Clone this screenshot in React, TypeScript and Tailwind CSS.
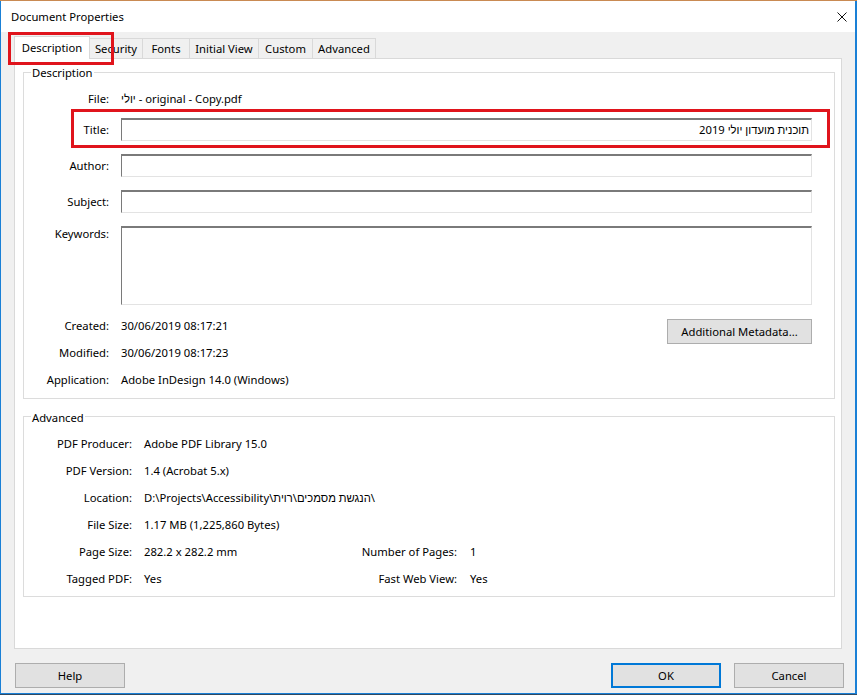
import React from "react";

function Input({ h = "h-[23px]", children }: { h?: string; children?: React.ReactNode }) {
  return (
    <div
      className={`${h} flex-1 bg-white border-t-2 border-l border-t-[#7a7a7a] border-l-[#7a7a7a] border-r border-b border-r-[#e3e3e3] border-b-[#e3e3e3] flex items-center`}
    >
      {children}
    </div>
  );
}

function Row({ label, children, top = "" }: { label: string; children: React.ReactNode; top?: string }) {
  return (
    <div className={`flex ${top} pr-[22px]`}>
      <div className="w-[85px] text-right shrink-0">{label}</div>
      <div className="ml-[12px] flex-1 flex">{children}</div>
    </div>
  );
}

function InfoRow({ label, value, mt = "" }: { label: string; value: string; mt?: string }) {
  return (
    <div className={`flex h-[16px] ${mt}`}>
      <div className="w-[85px] text-right shrink-0">{label}</div>
      <div className="ml-[12px]">{value}</div>
    </div>
  );
}

function AdvRow({
  label,
  value,
  label2,
  value2,
  mt = "",
}: {
  label: string;
  value: string;
  label2?: string;
  value2?: string;
  mt?: string;
}) {
  return (
    <div className={`flex h-[16px] ${mt}`}>
      <div className="w-[108px] text-right shrink-0">{label}</div>
      <div className="ml-[12px] w-[196px] shrink-0 whitespace-nowrap">{value}</div>
      {label2 && (
        <>
          <div className="w-[117px] text-right shrink-0">{label2}</div>
          <div className="ml-[13px]">{value2}</div>
        </>
      )}
    </div>
  );
}

export default function App() {
  return (
    <div className="relative w-[857px] h-[695px] bg-[#3d5366] flex flex-col font-['Noto_Sans','Liberation_Sans','DejaVu_Sans',sans-serif] text-[11.25px] leading-[16px] text-black">
      <div className="h-[1px] bg-[#c98a52]" />
      <div className="w-[857px] h-[693px] border-l border-r-2 border-b border-[#1a80d6] flex flex-col bg-[#f0f0f0]">
        {/* Title bar */}
        <div className="h-[31px] bg-white flex items-center justify-between pl-[10px] pr-[8px]">
          <span className="mt-[1px]">Document Properties</span>
          <svg width="10" height="10" viewBox="0 0 10 10" className="mt-[1px]">
            <path d="M0.5 0.5 L9.5 9.5 M9.5 0.5 L0.5 9.5" stroke="#111" strokeWidth="1" />
          </svg>
        </div>

        {/* Body */}
        <div className="flex-1 flex flex-col pl-[13px] pr-[11px]">
          {/* Tabs */}
          <div className="mt-[4px] h-[22px] flex items-end">
            <div className="relative z-10 w-[76px] h-[23px] -mb-[1px] bg-white border-t border-l border-r border-[#d9d9d9] flex items-center justify-center pb-[1px]">
              Description
            </div>
            <div className="w-[53px] h-[20px] border-t border-r border-[#d9d9d9] flex items-center justify-center">Security</div>
            <div className="w-[47px] h-[20px] border-t border-r border-[#d9d9d9] flex items-center justify-center">Fonts</div>
            <div className="w-[69px] h-[20px] border-t border-r border-[#d9d9d9] flex items-center justify-center">Initial View</div>
            <div className="w-[54px] h-[20px] border-t border-r border-[#d9d9d9] flex items-center justify-center">Custom</div>
            <div className="w-[63px] h-[20px] border-t border-r border-[#d9d9d9] flex items-center justify-center">Advanced</div>
          </div>

          {/* Panel */}
          <div className="w-[828px] h-[591px] bg-white border border-[#d9d9d9] pt-[5px] pl-[8px] pr-[6px]">
            <fieldset className="w-[812px] border border-[#dcdcdc] pb-[10px]">
              <legend className="relative top-[1px] ml-[7px] px-[1px]">Description</legend>
              <div className="flex flex-col">
                <div className="flex h-[16px] mt-[11px]">
                  <div className="w-[85px] text-right shrink-0">File:</div>
                  <div className="ml-[12px]">יולי - original - Copy.pdf</div>
                </div>
                <Row label="Title:" top="mt-[11px] items-center">
                  <Input>
                    <div dir="rtl" className="w-full text-right pr-[2px]">
                      תוכנית מועדון יולי 2019
                    </div>
                  </Input>
                </Row>
                <Row label="Author:" top="mt-[13px] items-center">
                  <Input />
                </Row>
                <Row label="Subject:" top="mt-[13px] items-center">
                  <Input />
                </Row>
                <Row label="Keywords:" top="mt-[13px] items-start">
                  <Input h="h-[79px]" />
                </Row>
                <div className="flex mt-[12px] pr-[22px]">
                  <div className="flex-1 flex flex-col pt-[1px]">
                    <InfoRow label="Created:" value="30/06/2019 08:17:21" />
                    <InfoRow label="Modified:" value="30/06/2019 08:17:23" mt="mt-[11px]" />
                    <InfoRow label="Application:" value="Adobe InDesign 14.0 (Windows)" mt="mt-[11px]" />
                  </div>
                  <button className="mt-[2px] w-[145px] h-[25px] bg-[#e1e1e1] border border-[#adadad] flex items-center justify-center">
                    Additional Metadata...
                  </button>
                </div>
              </div>
            </fieldset>

            <fieldset className="mt-[9px] w-[812px] border border-[#dcdcdc] pb-[9px]">
              <legend className="relative top-[2px] ml-[7px] px-[1px]">Advanced</legend>
              <div className="flex flex-col">
                <AdvRow label="PDF Producer:" value="Adobe PDF Library 15.0" mt="mt-[12px]" />
                <AdvRow label="PDF Version:" value="1.4 (Acrobat 5.x)" mt="mt-[11px]" />
                <AdvRow label="Location:" value="D:\Projects\Accessibility\הנגשת מסמכים\רוית\" mt="mt-[11px]" />
                <AdvRow label="File Size:" value="1.17 MB (1,225,860 Bytes)" mt="mt-[11px]" />
                <AdvRow label="Page Size:" value="282.2 x 282.2 mm" label2="Number of Pages:" value2="1" mt="mt-[11px]" />
                <AdvRow label="Tagged PDF:" value="Yes" label2="Fast Web View:" value2="Yes" mt="mt-[11px]" />
              </div>
            </fieldset>
          </div>

          {/* Buttons */}
          <div className="mt-[14px] flex items-start">
            <button className="ml-[1px] w-[110px] h-[25px] bg-[#e1e1e1] border border-[#adadad] flex items-center justify-center">
              Help
            </button>
            <div className="flex-1" />
            <button className="w-[110px] h-[25px] bg-[#e1e1e1] border-2 border-[#0078d7] flex items-center justify-center">
              OK
            </button>
            <button className="ml-[13px] w-[110px] h-[25px] bg-[#e1e1e1] border border-[#adadad] flex items-center justify-center">
              Cancel
            </button>
          </div>
        </div>
      </div>
      <div className="h-[1px] bg-[#2f4a63]" />

      {/* Red annotation boxes */}
      <div className="absolute left-[8px] top-[32px] w-[106px] h-[33px] border-[3px] border-[#e0141c] pointer-events-none" />
      <div className="absolute left-[71px] top-[109px] w-[759px] h-[39px] border-[3px] border-[#e0141c] pointer-events-none" />
    </div>
  );
}
